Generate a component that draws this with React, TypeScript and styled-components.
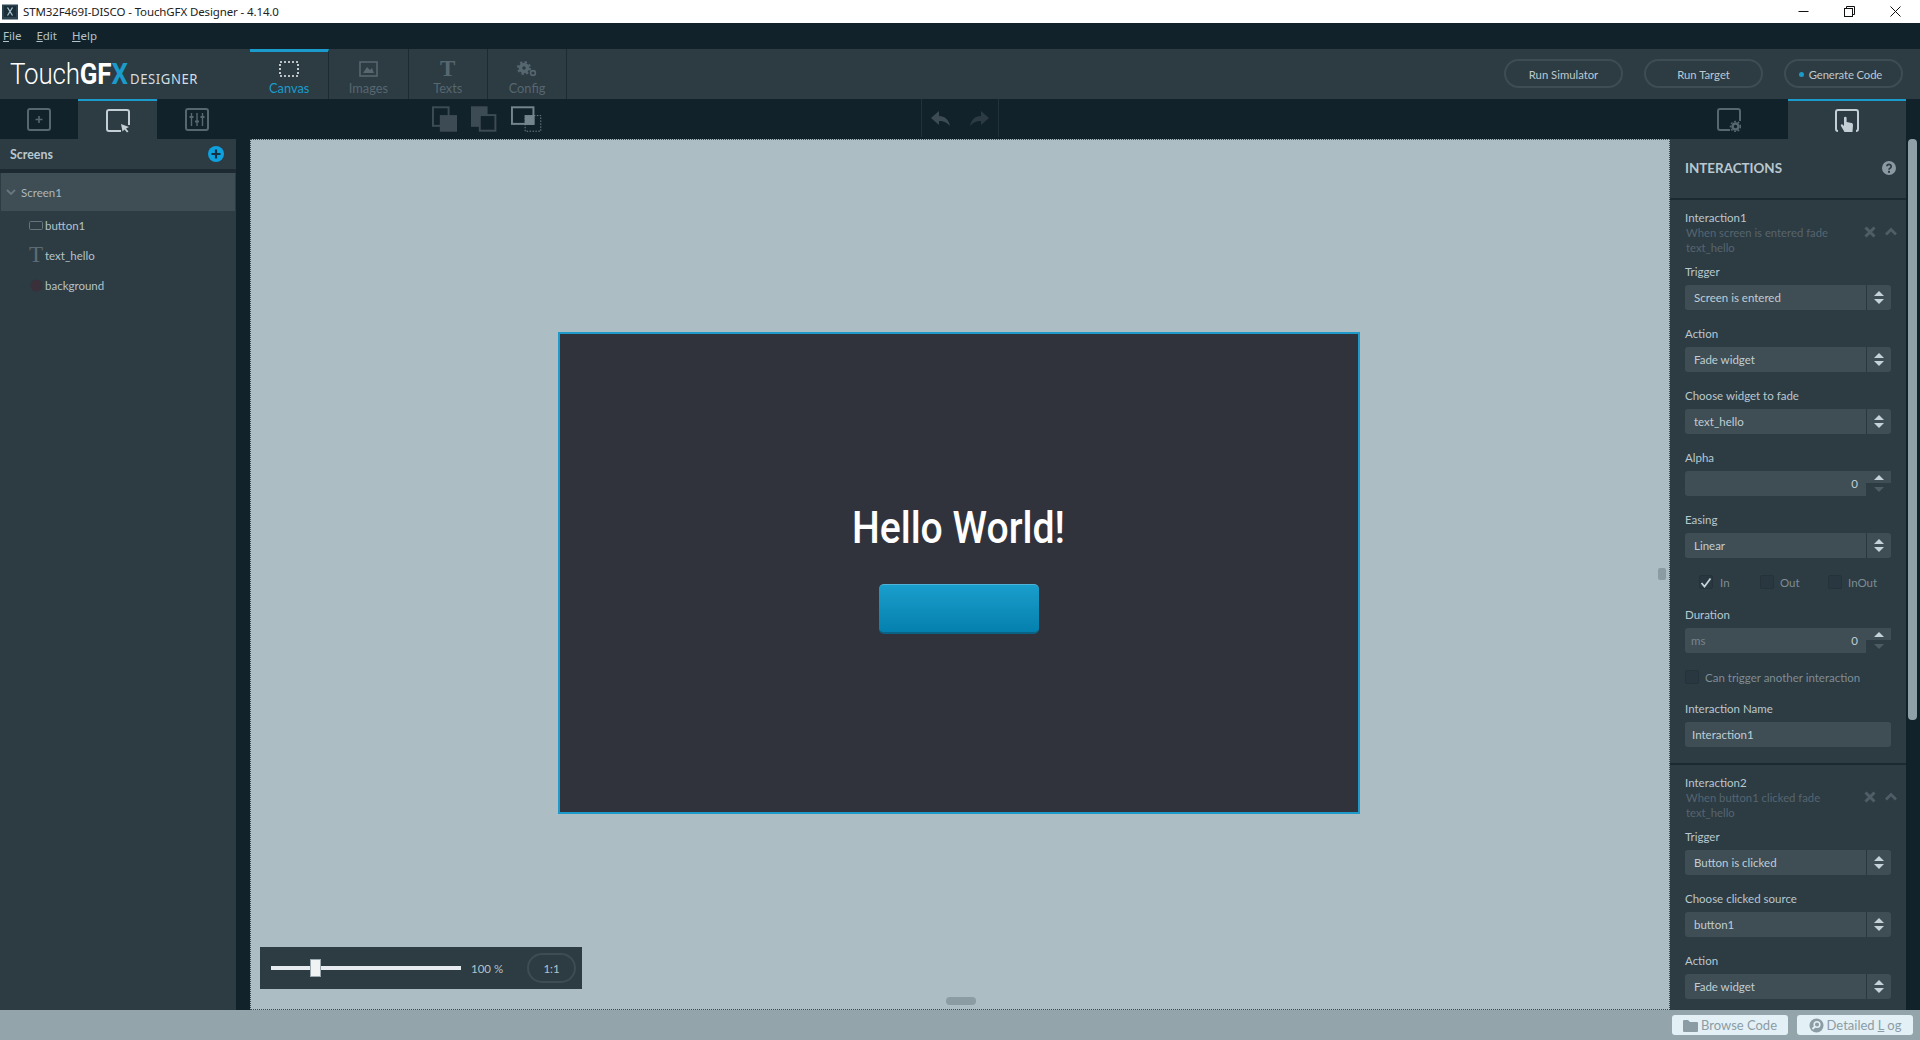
import React from 'react';
import styled, { createGlobalStyle } from 'styled-components';

const C = {
  dark: '#12222a', panel: '#2d3b43', field: '#3f4d55', label: '#b9c8cf', dim: '#566570',
  icon: '#566770', blue: '#1a9bcb', canvas: '#adbdc4', foot: '#93a4ab',
};
const UI = `"Lato", "Noto Sans", sans-serif`;

const Global = createGlobalStyle`
  html, body { margin: 0; padding: 0; height: 100%; background: ${C.dark}; }
  #root { height: 100%; }
  * { box-sizing: border-box; }
  body { font-family: ${UI}; font-size: 11.5px; color: ${C.label}; overflow: hidden; }
`;

const Page = styled.div`display:flex;flex-direction:column;width:1920px;height:1040px;overflow:hidden;`;

/* title bar */
const TitleBar = styled.div`height:23px;background:#fff;display:flex;align-items:center;padding-left:2px;color:#222;font-family:"Noto Sans",sans-serif;font-size:11.5px;flex:none;`;
const TitleText = styled.span`margin-left:5px;flex:1;letter-spacing:-.12px;`;
const WinBtn = styled.span`width:46px;height:23px;display:flex;align-items:center;justify-content:center;`;
const WinGroup = styled.div`display:flex;margin-right:2px;`;

/* menu */
const MenuBar = styled.div`height:26px;background:${C.dark};display:flex;align-items:center;padding:0 0 1px 3px;gap:15px;flex:none;font-family:"Noto Sans",sans-serif;font-size:11.5px;color:#b4c2c9;`;
const U = styled.span`text-decoration:underline;`;

/* header */
const Header = styled.div`height:50px;background:${C.panel};display:flex;flex:none;`;
const Logo = styled.div`width:250px;display:flex;align-items:baseline;padding:8px 0 0 10px;font-family:"Roboto",sans-serif;color:#fff;`;
const LogoMain = styled.span`font-size:29px;font-weight:300;display:inline-block;transform:scaleX(.895);transform-origin:left;width:119px;white-space:nowrap;letter-spacing:-.2px;`;
const LogoB = styled.b`font-weight:700;`;
const LogoX = styled.b`font-weight:700;color:#1a9bcb;`;
const LogoSub = styled.span`font-size:13.5px;letter-spacing:.6px;margin-left:1px;color:#d5dee2;font-family:"Noto Sans",sans-serif;display:inline-block;transform:scaleX(.97);transform-origin:left;`;
const NavTab = styled.div<{ $active?: boolean }>`
  width:79.3px;border-right:1px solid #1c2a32;display:flex;flex-direction:column;align-items:center;
  padding-top:${p => (p.$active ? 8 : 11)}px;
  border-top:${p => (p.$active ? `3px solid ${C.blue}` : 'none')};
  color:${p => (p.$active ? C.blue : C.icon)};font-size:12.8px;
  &:first-of-type{border-left:1px solid #1c2a32;}
`;
const NavIcon = styled.div`height:17px;display:flex;align-items:center;justify-content:center;margin-bottom:3px;`;
const SerifT = styled.span`font-family:"Liberation Serif",serif;font-size:23px;line-height:17px;font-weight:700;color:${C.icon};`;
const NavSpacer = styled.div`flex:1;`;
const PillRow = styled.div`display:flex;gap:21px;padding:10px 17px 0 0;`;
const Pill = styled.div`width:119px;height:29px;border:2px solid #3e4c54;border-radius:15px;display:flex;align-items:center;justify-content:center;font-size:11.3px;color:#bccad0;gap:5px;padding-top:1px;`;
const GenPill = styled(Pill)`padding-right:6px;letter-spacing:-.12px;`;
const Dot = styled.span`width:5px;height:5px;border-radius:50%;background:${C.blue};`;

/* toolbar */
const Toolbar = styled.div`height:40px;background:${C.dark};display:flex;flex:none;`;
const SideTabs = styled.div`width:236px;display:grid;grid-template-columns:78px 79px 79px;`;
const ToolTab = styled.div<{ $active?: boolean }>`
  display:flex;align-items:center;justify-content:center;padding-top:1px;
  background:${p => (p.$active ? C.panel : 'transparent')};
  border-top:${p => (p.$active ? `2px solid ${C.blue}` : 'none')};
`;
const Arrange = styled.div`margin-left:196px;width:110px;padding-top:7px;display:flex;align-items:flex-start;gap:14px;`;
const Undo = styled.div`margin-left:379px;width:78px;height:38px;border-left:1px solid #23323a;border-right:1px solid #23323a;display:flex;align-items:center;justify-content:center;gap:18px;`;
const RightTabs = styled.div`margin-left:auto;width:118px;margin-right:14px;display:flex;`;
const RightTabOff = styled(ToolTab)`position:absolute;right:161px;top:99px;height:40px;width:60px;`;
const RightTabOn = styled(ToolTab)`width:118px;`;

/* body */
const Body = styled.div`height:871px;display:flex;flex:none;`;
const Sidebar = styled.aside`width:236px;background:${C.panel};display:flex;flex-direction:column;`;
const SideHead = styled.div`height:30px;display:flex;align-items:center;justify-content:space-between;padding:0 12px 0 10px;font-weight:700;font-size:12.4px;`;
const SideGap = styled.div`height:4px;background:#1d2a32;`;
const ScreenRow = styled.div`height:38px;margin:0 1px;background:${C.field};display:flex;align-items:center;padding-left:5px;gap:5px;color:#a9b8bf;`;
const TreeList = styled.div`margin-top:-1px;`;
const TreeRow = styled.div`height:30px;display:flex;align-items:center;padding-left:29px;gap:2px;color:#b4c3ca;`;
const TreeIcon = styled.span`width:14px;display:flex;justify-content:center;`;
const TreeT = styled.span`font-family:"Liberation Serif",serif;font-size:23px;line-height:20px;color:#5c6c74;`;

const Canvas = styled.main`
  position:relative;margin-left:14px;flex:1;background:${C.canvas};
  border:1px dotted #3a4a52;display:grid;place-items:center;padding:0 3px 3px 0;
`;
const Screen = styled.div`width:802px;height:482px;background:#31333c;border:2px solid #1d9ac9;display:flex;flex-direction:column;align-items:center;padding-top:171px;`;
const Hello = styled.div`font-family:"Roboto",sans-serif;font-size:45px;line-height:45px;font-weight:500;color:#fff;transform:scaleX(.87);white-space:nowrap;`;
const HwButton = styled.div`
  margin-top:34px;width:160px;height:50px;border-radius:5px;
  background:linear-gradient(#1a9ecb,#0580ae);border-top:1px solid #4fb2d6;border-bottom:2px solid #0a6384;
`;
const ZoomBox = styled.div`position:absolute;left:9px;bottom:20px;width:322px;height:42px;background:${C.panel};display:flex;align-items:center;padding-left:11px;`;
const Track = styled.div`position:relative;width:190px;height:4px;background:#e6ecef;`;
const Thumb = styled.div`position:absolute;left:39px;top:-7px;width:11px;height:18px;background:#f0f3f4;border:1px solid #9aa8ae;`;
const ZoomText = styled.span`margin-left:10px;width:56px;font-size:11.5px;color:#b4c2c9;`;
const OneToOne = styled.div`width:49px;height:30px;border:2px solid #3e4c54;border-radius:15px;display:flex;align-items:center;justify-content:center;font-size:11.5px;color:#b4c2c9;`;
const HandleV = styled.div`position:absolute;right:3px;top:428px;width:8px;height:12px;background:#8b9ca3;border-radius:2px;`;
const HandleH = styled.div`position:absolute;left:695px;bottom:4px;width:30px;height:8px;background:#8b9ca3;border-radius:4px;`;

/* right panel */
const Panel = styled.aside`width:236px;background:${C.panel};overflow:hidden;flex:none;`;
const Scroll = styled.div`width:14px;flex:none;padding:0 3px 0 2px;`;
const ScrollThumb = styled.div`height:581px;background:#8fa0a8;border-radius:4px;`;
const PanelHead = styled.div`height:61px;border-bottom:2px solid #1b2931;display:flex;align-items:center;justify-content:space-between;padding:0 10px 2px 15px;font-size:13.4px;font-weight:700;color:#b9c8cf;`;
const Section = styled.section`padding:11px 15px 16px;border-bottom:2px solid #1b2931;`;
const Title = styled.div`line-height:14px;`;
const DescRow = styled.div`display:flex;justify-content:space-between;margin:0 -6px 10px 1px;`;
const Desc = styled.div`width:150px;font-size:11.3px;line-height:15px;color:${C.dim};`;
const DescIcons = styled.div`display:flex;gap:9px;height:14px;padding-top:1px;`;
const Field = styled.div`margin-bottom:17px;`;
const Label = styled.div`line-height:14px;margin-bottom:6px;`;
const Box = styled.div`height:25px;background:${C.field};border-radius:3px;display:flex;align-items:center;color:#c0ced4;`;
const BoxText = styled.span<{ $pad?: number }>`flex:1;display:flex;justify-content:space-between;padding:0 8px 0 ${p => p.$pad ?? 9}px;color:#c0ced4;`;
const Ms = styled.span`color:#76858d;`;
const Right = styled.span`margin-left:auto;`;
const Spin = styled.span`width:25px;height:25px;border-left:1px solid #2a373f;display:flex;flex-direction:column;align-items:center;justify-content:center;gap:3px;`;
const NumSpin = styled.span`width:25px;height:25px;display:flex;flex-direction:column;background:${C.panel};`;
const NumUp = styled.span`height:12px;background:${C.field};display:flex;align-items:center;justify-content:center;`;
const NumDown = styled.span`height:13px;display:flex;align-items:center;justify-content:center;`;
const TriU = styled.i<{ $c?: string }>`width:0;height:0;border-left:5px solid transparent;border-right:5px solid transparent;border-bottom:5px solid ${p => p.$c || '#c5d2d8'};`;
const TriD = styled.i<{ $c?: string }>`width:0;height:0;border-left:5px solid transparent;border-right:5px solid transparent;border-top:5px solid ${p => p.$c || '#c5d2d8'};`;
const Checks = styled.div`display:flex;padding-left:14px;margin:0 0 19px;height:14px;align-items:center;`;
const CheckItem = styled.div<{ $w: number; $gap: number }>`width:${p => p.$w}px;display:flex;align-items:center;gap:${p => p.$gap}px;color:#7e8d95;`;
const Box14 = styled.span`width:14px;height:14px;background:#293740;border:1px solid #25323a;border-radius:2px;display:flex;align-items:center;justify-content:center;`;
const Can = styled(CheckItem)`margin:0 0 18px;height:14px;`;

const Footer = styled.footer`height:30px;background:${C.foot};display:flex;justify-content:flex-end;align-items:center;gap:9px;padding:0 7px 0 0;flex:none;`;
const FootBtn = styled.div`width:116px;height:20px;background:#e3f0f6;border-radius:3px;display:flex;align-items:center;justify-content:center;gap:3px;color:#8c9ca4;font-size:13px;`;

const Updown = () => <Spin><TriU /><TriD /></Spin>;
const NumBtns = () => (
  <NumSpin>
    <NumUp><TriU /></NumUp>
    <NumDown><TriD $c="#4d5c64" /></NumDown>
  </NumSpin>
);
const Select = ({ label, value }: { label: string; value: string }) => (
  <Field>
    <Label>{label}</Label>
    <Box><BoxText>{value}</BoxText><Updown /></Box>
  </Field>
);
const CloseIcons = () => (
  <DescIcons>
    <svg width="12" height="12" viewBox="0 0 12 12"><path d="M1.500 1.500l9 9M10.500 1.500l-9 9" stroke="#4f5e66" strokeWidth="3" /></svg>
    <svg width="12" height="12" viewBox="0 0 12 12"><path d="M1 8.500l5-5 5 5" stroke="#4f5e66" strokeWidth="2.800" fill="none" /></svg>
  </DescIcons>
);

export default function App() {
  return (
    <Page>
      <Global />
      <TitleBar>
        <svg width="16" height="16" viewBox="0 0 16 16">
          <rect width="16" height="15" y="0.500" fill="#2b4250" />
          <rect x="2" y="2" width="12" height="11" fill="#1a2f3a" />
          <path d="M5.500 3.500l5 8M10.500 3.500l-5 8" stroke="#a9c4d0" strokeWidth="1.300" />
        </svg>
        <TitleText>STM32F469I-DISCO - TouchGFX Designer - 4.14.0</TitleText>
        <WinGroup>
          <WinBtn><svg width="11" height="11" viewBox="0 0 11 11"><path d="M0.500 5.500h10" stroke="#111" /></svg></WinBtn>
          <WinBtn><svg width="11" height="11" viewBox="0 0 11 11" fill="none" stroke="#111"><rect x="0.500" y="2.500" width="8" height="8" /><path d="M2.500 2.500v-2h8v8h-2" /></svg></WinBtn>
          <WinBtn><svg width="11" height="11" viewBox="0 0 11 11"><path d="M0.500 0.500l10 10M10.500 0.500l-10 10" stroke="#111" /></svg></WinBtn>
        </WinGroup>
      </TitleBar>
      <MenuBar>
        <span><U>F</U>ile</span><span><U>E</U>dit</span><span><U>H</U>elp</span>
      </MenuBar>
      <Header>
        <Logo>
          <LogoMain>Touch<LogoB>GF</LogoB><LogoX>X</LogoX></LogoMain>
          <LogoSub>DESIGNER</LogoSub>
        </Logo>
        <NavTab $active>
          <NavIcon><svg width="20" height="16" viewBox="0 0 20 16"><rect x="1" y="1" width="18" height="14" fill="none" stroke="#e8eef0" strokeWidth="1.600" strokeDasharray="2 2" /></svg></NavIcon>
          Canvas
        </NavTab>
        <NavTab>
          <NavIcon><svg width="19" height="16" viewBox="0 0 19 16"><rect x="1" y="1" width="17" height="14" fill="none" stroke={C.icon} strokeWidth="1.600" /><path d="M4 12l4-6 3 3 2-2 2 5z" fill={C.icon} /></svg></NavIcon>
          Images
        </NavTab>
        <NavTab>
          <NavIcon><SerifT>T</SerifT></NavIcon>
          Texts
        </NavTab>
        <NavTab>
          <NavIcon>
            <svg width="20" height="16" viewBox="0 0 20 16" fill="none" stroke={C.icon}>
              <circle cx="7" cy="7" r="3.500" strokeWidth="3.500" />
              <circle cx="7" cy="7" r="6" strokeWidth="2" strokeDasharray="2.400 2.300" />
              <circle cx="16" cy="12" r="2.400" strokeWidth="1.600" />
            </svg>
          </NavIcon>
          Config
        </NavTab>
        <NavSpacer />
        <PillRow>
          <Pill>Run Simulator</Pill>
          <Pill>Run Target</Pill>
          <GenPill><Dot />Generate Code</GenPill>
        </PillRow>
      </Header>
      <Toolbar>
        <SideTabs>
          <ToolTab>
            <svg width="24" height="24" viewBox="0 0 24 24" fill="none" stroke={C.icon}><rect x="1" y="1" width="22" height="21" rx="2" strokeWidth="2" /><path d="M12 8v7M8.500 11.500h7" strokeWidth="1.600" /></svg>
          </ToolTab>
          <ToolTab $active>
            <svg width="24" height="24" viewBox="0 0 24 24" fill="none"><path d="M15 22H3a2 2 0 0 1-2-2V3a2 2 0 0 1 2-2h18a2 2 0 0 1 2 2v13" stroke="#c3cfd4" strokeWidth="2" /><path d="M15 15l8 3-3 1.500 2.500 3-1.500 1-2.500-3-2 2z" fill="#c3cfd4" /></svg>
          </ToolTab>
          <ToolTab>
            <svg width="24" height="24" viewBox="0 0 24 24" fill="none" stroke={C.icon}><rect x="1" y="1" width="22" height="21" rx="2" strokeWidth="2" /><path d="M6.500 5v13M12 5v13M17.500 5v13" strokeWidth="1.400" /><path d="M4.500 9h4M10 13.500h4M15.500 9h4" strokeWidth="2.200" /></svg>
          </ToolTab>
        </SideTabs>
        <Arrange>
          <svg width="26" height="26" viewBox="0 0 26 26"><rect x="1" y="1" width="16" height="19" fill="none" stroke="#3d4c54" strokeWidth="2" /><rect x="8" y="9" width="18" height="17" fill="#3d4c54" /></svg>
          <svg width="26" height="26" viewBox="0 0 26 26"><rect width="17" height="21" fill="#3d4c54" /><rect x="9" y="9" width="16" height="16" fill={C.dark} stroke="#3d4c54" strokeWidth="2" /></svg>
          <svg width="32" height="26" viewBox="0 0 32 26"><rect x="1" y="1" width="22" height="17" fill="none" stroke="#75858d" strokeWidth="2" /><rect x="14" y="9" width="10" height="10" fill="#75858d" /><rect x="14.500" y="9.500" width="16" height="16" fill="none" stroke="#75858d" strokeDasharray="1.500 1.500" /></svg>
        </Arrange>
        <Undo>
          <svg width="20" height="17" viewBox="0 0 20 17"><path d="M8 1L0 8l8 7v-4c5 0 8 1.500 11 5-1-6-5-10-11-10z" fill="#3d4c54" /></svg>
          <svg width="20" height="17" viewBox="0 0 20 17"><path d="M12 1l8 7-8 7v-4c-5 0-8 1.500-11 5 1-6 5-10 11-10z" fill="#2c3b43" /></svg>
        </Undo>
        <RightTabOff>
          <svg width="24" height="24" viewBox="0 0 24 24" fill="none"><path d="M13 22H3a2 2 0 0 1-2-2V3a2 2 0 0 1 2-2h18a2 2 0 0 1 2 2v10" stroke={C.icon} strokeWidth="2" /><circle cx="18.500" cy="18.500" r="3" stroke={C.icon} strokeWidth="2.500" /><circle cx="18.500" cy="18.500" r="5" stroke={C.icon} strokeWidth="1.500" strokeDasharray="1.800 1.800" /></svg>
        </RightTabOff>
        <RightTabs>
          <RightTabOn $active>
            <svg width="24" height="24" viewBox="0 0 24 24" fill="none"><path d="M3 22a2 2 0 0 1-2-2V3a2 2 0 0 1 2-2h18a2 2 0 0 1 2 2v17a2 2 0 0 1-2 2" stroke="#c3cfd4" strokeWidth="2" /><path d="M9 9a1.300 1.300 0 0 1 2.600 0v4l5 1c1 .3 1.400 1 1.400 2l-.5 7H9.500L6 17c-.7-1 .7-2.300 1.700-1.300L9 17z" fill="#c3cfd4" /></svg>
          </RightTabOn>
        </RightTabs>
      </Toolbar>
      <Body>
        <Sidebar>
          <SideHead>
            Screens
            <svg width="16" height="16" viewBox="0 0 16 16"><circle cx="8" cy="8" r="8" fill="#0fa0de" /><path d="M8 3.500v9M3.500 8h9" stroke="#12303f" strokeWidth="2.200" /></svg>
          </SideHead>
          <SideGap />
          <ScreenRow>
            <svg width="10" height="7" viewBox="0 0 10 7"><path d="M1 1l4 4 4-4" stroke="#68777f" strokeWidth="1.800" fill="none" /></svg>
            Screen1
          </ScreenRow>
          <TreeList>
            <TreeRow>
              <TreeIcon><svg width="14" height="9" viewBox="0 0 14 9"><rect x="0.500" y="0.500" width="13" height="8" rx="1" fill="none" stroke="#66757d" /></svg></TreeIcon>
              button1
            </TreeRow>
            <TreeRow><TreeIcon><TreeT>T</TreeT></TreeIcon>text_hello</TreeRow>
            <TreeRow>
              <TreeIcon><svg width="13" height="13" viewBox="0 0 13 13"><circle cx="6.500" cy="6.500" r="6" fill="#3a3039" /></svg></TreeIcon>
              background
            </TreeRow>
          </TreeList>
        </Sidebar>
        <Canvas>
          <Screen>
            <Hello>Hello World!</Hello>
            <HwButton />
          </Screen>
          <ZoomBox>
            <Track><Thumb /></Track>
            <ZoomText>100 %</ZoomText>
            <OneToOne>1:1</OneToOne>
          </ZoomBox>
          <HandleV />
          <HandleH />
        </Canvas>
        <Panel>
          <PanelHead>
            INTERACTIONS
            <svg width="14" height="14" viewBox="0 0 14 14"><circle cx="7" cy="7" r="7" fill="#8b9aa2" /><path d="M4.800 5.300a2.200 2 0 1 1 3.200 1.900c-.7.4-1 .7-1 1.500" stroke={C.panel} strokeWidth="1.700" fill="none" /><rect x="6" y="9.800" width="2" height="2" fill={C.panel} /></svg>
          </PanelHead>
          <Section>
            <Title>Interaction1</Title>
            <DescRow><Desc>When screen is entered fade text_hello</Desc><CloseIcons /></DescRow>
            <Select label="Trigger" value="Screen is entered" />
            <Select label="Action" value="Fade widget" />
            <Select label="Choose widget to fade" value="text_hello" />
            <Field>
              <Label>Alpha</Label>
              <Box><BoxText><Right>0</Right></BoxText><NumBtns /></Box>
            </Field>
            <Select label="Easing" value="Linear" />
            <Checks>
              <CheckItem $w={61} $gap={7}><Box14><svg width="12" height="11" viewBox="0 0 12 11"><path d="M1.500 6l3 3.500L10.500 1.500" stroke="#c5d2d8" strokeWidth="1.800" fill="none" /></svg></Box14>In</CheckItem>
              <CheckItem $w={68} $gap={6}><Box14 />Out</CheckItem>
              <CheckItem $w={60} $gap={6}><Box14 />InOut</CheckItem>
            </Checks>
            <Field>
              <Label>Duration</Label>
              <Box><BoxText $pad={6}><Ms>ms</Ms><span>0</span></BoxText><NumBtns /></Box>
            </Field>
            <Can $w={206} $gap={6}><Box14 />Can trigger another interaction</Can>
            <Label>Interaction Name</Label>
            <Box><BoxText $pad={7}>Interaction1</BoxText></Box>
          </Section>
          <Section>
            <Title>Interaction2</Title>
            <DescRow><Desc>When button1 clicked fade text_hello</Desc><CloseIcons /></DescRow>
            <Select label="Trigger" value="Button is clicked" />
            <Select label="Choose clicked source" value="button1" />
            <Select label="Action" value="Fade widget" />
          </Section>
        </Panel>
        <Scroll><ScrollThumb /></Scroll>
      </Body>
      <Footer>
        <FootBtn>
          <svg width="15" height="13" viewBox="0 0 15 13"><path d="M0 2a1 1 0 0 1 1-1h4l2 2h7a1 1 0 0 1 1 1v8a1 1 0 0 1-1 1H1a1 1 0 0 1-1-1z" fill="#8c9ca4" /></svg>
          Browse Code
        </FootBtn>
        <FootBtn>
          <svg width="15" height="15" viewBox="0 0 15 15"><circle cx="7.500" cy="7.500" r="7" fill="#8c9ca4" /><circle cx="8" cy="6.500" r="2.800" fill="none" stroke="#e3f0f6" strokeWidth="1.500" /><path d="M6 8.500l-2.500 2.500" stroke="#e3f0f6" strokeWidth="1.800" /></svg>
          Detailed <U>L</U>og
        </FootBtn>
      </Footer>
    </Page>
  );
}
